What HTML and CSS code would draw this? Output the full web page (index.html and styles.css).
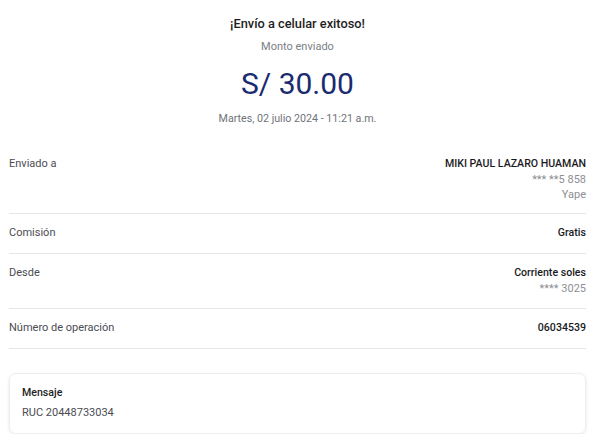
FILE: index.html
```html
<!DOCTYPE html>
<html lang="es">
<head>
<meta charset="utf-8">
<title>Constancia</title>
<link rel="stylesheet" href="styles.css">
</head>
<body>
<main class="page">
  <header class="head">
    <h1 class="title">¡Envío a celular exitoso!</h1>
    <p class="sub">Monto enviado</p>
    <p class="amount">S/ 30.00</p>
    <p class="date">Martes, 02 julio 2024 - 11:21 a.m.</p>
  </header>
  <section class="rows">
    <div class="row row-first">
      <span class="label">Enviado a</span>
      <div class="value">
        <span class="main">MIKI PAUL LAZARO HUAMAN</span>
        <span class="minor">*** **5 858</span>
        <span class="minor">Yape</span>
      </div>
    </div>
    <div class="row">
      <span class="label">Comisión</span>
      <div class="value"><span class="main">Gratis</span></div>
    </div>
    <div class="row row-tight">
      <span class="label">Desde</span>
      <div class="value">
        <span class="main">Corriente soles</span>
        <span class="minor">**** 3025</span>
      </div>
    </div>
    <div class="row">
      <span class="label">Número de operación</span>
      <div class="value"><span class="main">06034539</span></div>
    </div>
  </section>
  <section class="card">
    <span class="card-title">Mensaje</span>
    <span class="card-text">RUC 20448733034</span>
  </section>
</main>
</body>
</html>
```

FILE: styles.css
```css
* { box-sizing: border-box; }
html, body { margin: 0; padding: 0; background: #ffffff; }
body {
  font-family: Roboto, "Liberation Sans", Arial, sans-serif;
  font-size: 11px;
  line-height: 16px;
  color: #222;
}
.page {
  width: 600px;
  padding: 16px 14px 0 9px;
}
.head {
  display: flex;
  flex-direction: column;
  align-items: center;
  text-align: center;
}
.head p, .head h1 { margin: 0; }
.title {
  font-size: 12.8px;
  line-height: 16px;
  font-weight: 500;
  color: #1e1e22;
}
.sub {
  margin-top: 7px !important;
  color: #7b7e85;
}
.amount {
  margin-top: 11px !important;
  font-size: 30px;
  line-height: 36px;
  font-weight: 400;
  color: #1a2b70;
}
.date {
  margin-top: 9px !important;
  font-size: 10.7px;
  color: #70737a;
}
.rows { margin-top: 18px; }
.row {
  display: flex;
  justify-content: space-between;
  align-items: flex-start;
  padding: 11px 0 12px;
  border-bottom: 1px solid #e6e6e8;
}
.row-first { padding-bottom: 10px; }
.row-first .value { line-height: 15.5px; }
.row-tight { padding-bottom: 11px; }
.label { color: #4a4c52; }
.value {
  display: flex;
  flex-direction: column;
  align-items: flex-end;
  text-align: right;
}
.main { color: #1a1a1e; font-weight: 500; font-size: 10.6px; }
.minor { color: #8c8f95; }
.card {
  margin-top: 24px;
  display: flex;
  flex-direction: column;
  gap: 4px;
  padding: 11px 12px 12px;
  border: 1px solid #eceef1;
  border-radius: 7px;
  box-shadow: 0 1px 3px rgba(30, 40, 70, 0.12);
}
.card-title { color: #1e1e22; font-weight: 500; font-size: 10.6px; }
.card-text { color: #4a4c52; }
```
